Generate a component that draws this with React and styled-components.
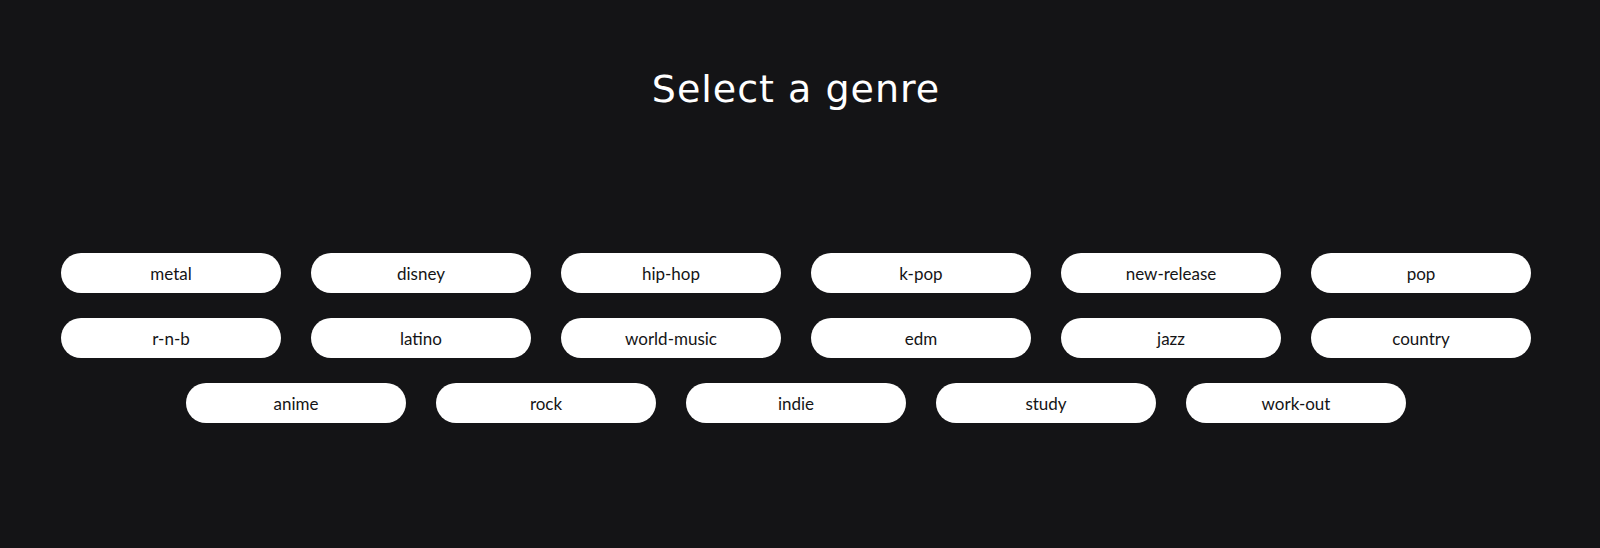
import React from "react"
import styled, { createGlobalStyle } from "styled-components"

const Global = createGlobalStyle`
    html, body {
        margin: 0;
        padding: 0;
        background: #141416;
    }
    body {
        font-family: Lato, "Noto Sans", sans-serif;
    }
`

const Page = styled.main`
    width: 1592px;
    min-height: 548px;
    display: flex;
    flex-direction: column;
    align-items: center;
`

const Title = styled.h1`
    margin: 64px 0 0;
    font-family: "DejaVu Sans", sans-serif;
    font-size: 38px;
    font-weight: 400;
    line-height: 50px;
    letter-spacing: 1px;
    color: #fff;
`

const Genres = styled.div`
    margin-top: 139px;
    width: 1470px;
    display: flex;
    flex-wrap: wrap;
    justify-content: center;
    column-gap: 30px;
    row-gap: 25px;
`

const Genre = styled.button`
    width: 220px;
    height: 40px;
    border: none;
    border-radius: 20px;
    background: #fff;
    color: #141416;
    font-family: inherit;
    font-size: 17px;
    cursor: pointer;
`

const genres = [
    "metal", "disney", "hip-hop", "k-pop", "new-release", "pop",
    "r-n-b", "latino", "world-music", "edm", "jazz", "country",
    "anime", "rock", "indie", "study", "work-out",
]

export default function App() {
    return (
        <Page>
            <Global />
            <Title>Select a genre</Title>
            <Genres>
                {genres.map(g => (
                    <Genre key={g}>{g}</Genre>
                ))}
            </Genres>
        </Page>
    )
}
